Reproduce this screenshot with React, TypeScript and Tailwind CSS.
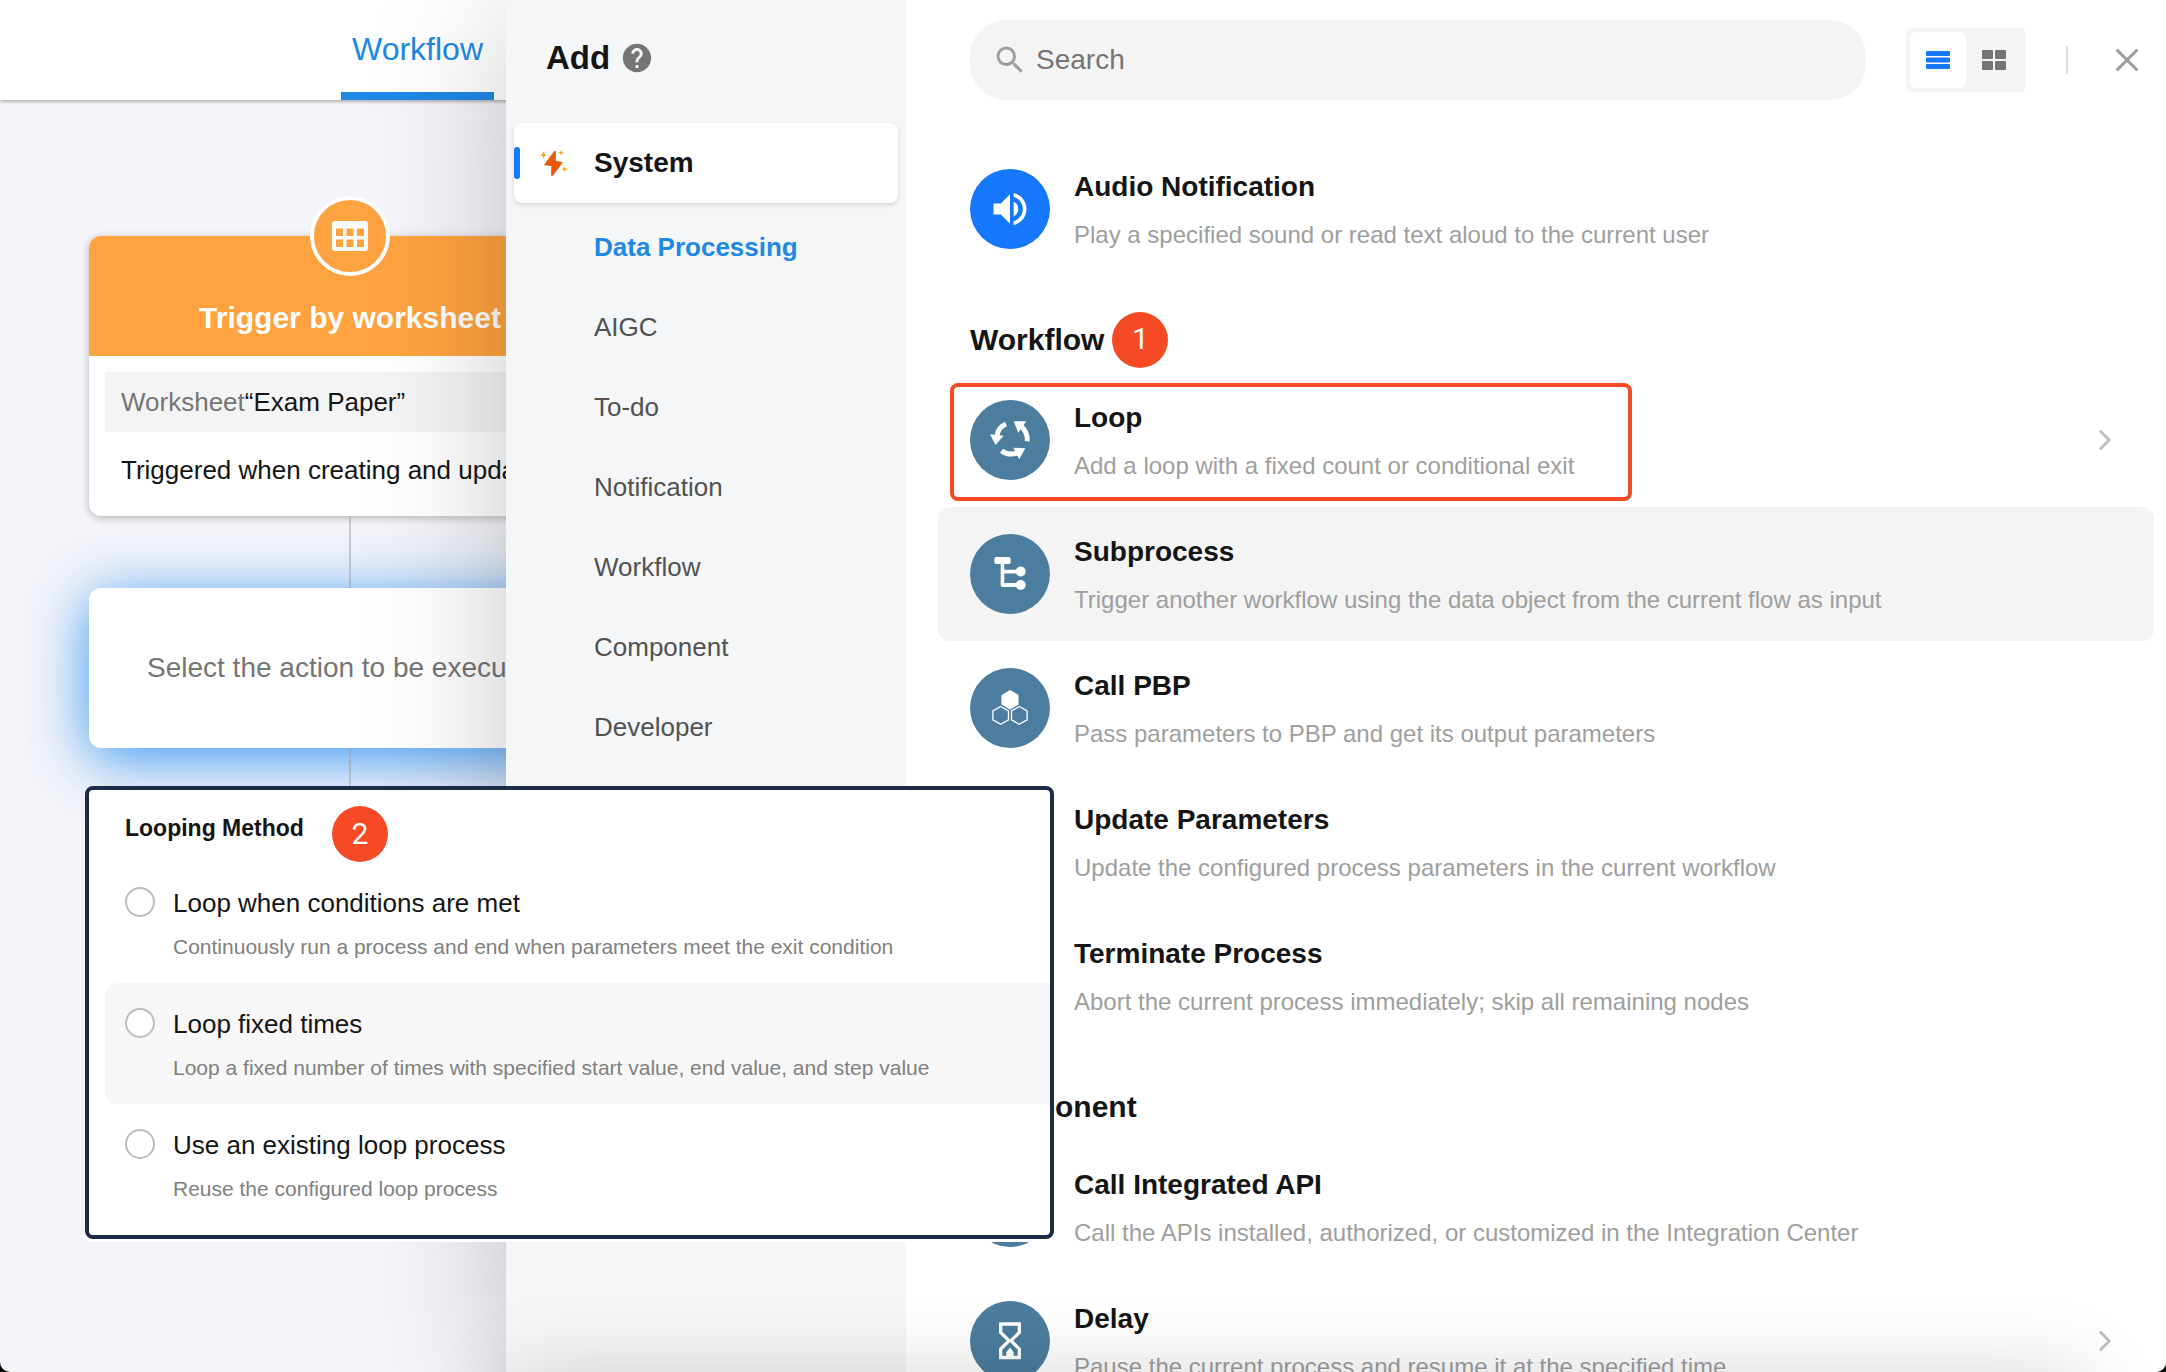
import { ReactNode, useState } from "react";
import { ChevronRight, X } from "lucide-react";
import { MdApi, MdEdit, MdHelp, MdSearch, MdStop, MdVolumeUp } from "react-icons/md";

interface ActionItem {
    title: string;
    description: string;
    icon: ReactNode;
    color?: string;
    expandable?: boolean;
    hovered?: boolean;
    marked?: boolean;
}

interface LoopMethod {
    id: string;
    label: string;
    description: string;
    hovered?: boolean;
}

const TableIcon = () => (
    <svg width="36" height="30" viewBox="0 0 36 30" aria-hidden="true">
        <path
            fill="#fff"
            fillRule="evenodd"
            d="M3 0h30a3 3 0 0 1 3 3v24a3 3 0 0 1-3 3H3a3 3 0 0 1-3-3V3a3 3 0 0 1 3-3zM4 7.500v7.500h7V7.500zM14.500 7.500v7.500h7V7.500zM25 7.500v7.500h7V7.500zM4 18.500v7.500h7v-7.500zM14.500 18.500v7.500h7v-7.500zM25 18.500v7.500h7v-7.500z"
        />
    </svg>
);

const BoltIcon = () => (
    <svg width="28" height="26" viewBox="0 0 28 26" aria-hidden="true">
        <path
            fill="#ea5a05"
            stroke="#ea5a05"
            strokeLinejoin="round"
            d="M14.500 1.300 4.500 14.800l7.500.800-.400 9.700h1.200l9.500-12.800-7-1.200V1.300z"
        />
        <path
            fill="#ff9f0e"
            d="M3.500 1.300l1 2.700 2.700 1-2.700 1-1 2.700-1-2.700L0 5l2.500-1zM21 0l.800 1.900 2 .800-2 .800L21 5.500l-.800-2-2-.800 2-.800zM24.500 16.300l.800 2 2 .800-2 .800-.800 2-.800-2-2-.800 2-.800z"
        />
    </svg>
);

const ListIcon = () => (
    <svg width="24" height="18" viewBox="0 0 24 18" fill="currentColor" aria-hidden="true">
        <rect width="24" height="5" rx="1" />
        <rect y="6.500" width="24" height="5" rx="1" />
        <rect y="13" width="24" height="5" rx="1" />
    </svg>
);

const GridIcon = () => (
    <svg width="24" height="20" viewBox="0 0 24 20" fill="currentColor" aria-hidden="true">
        <rect width="11" height="9" rx="1" />
        <rect x="13" width="11" height="9" rx="1" />
        <rect y="11" width="11" height="9" rx="1" />
        <rect x="13" y="11" width="11" height="9" rx="1" />
    </svg>
);

const LoopIcon = () => (
    <svg width="80" height="80" viewBox="0 0 80 80" aria-hidden="true">
        <g fill="none" stroke="#fff" strokeWidth="5">
            <path d="M36 24C31 26 27.500 30 26.800 36.500" />
            <path d="M57.300 41.300C57.800 35 55.500 29.500 50 25.500" />
            <path d="M31.500 50.700C36.500 54.500 42.500 55 49 52.500" />
        </g>
        <g fill="#fff">
            <path d="M20 34.300 33.700 35.700 25.500 45z" />
            <path d="M43.700 21.300H56.300L48.300 32.700z" />
            <path d="M43.300 47.700 55.300 48.300 49.300 59.300z" />
        </g>
    </svg>
);

const SubprocessIcon = () => (
    <svg width="80" height="80" viewBox="0 0 80 80" fill="#fff" aria-hidden="true">
        <rect x="24.300" y="23" width="16.400" height="7" rx="2" />
        <path d="M30.700 28h3.600v7.700H50v3.800H34.300V49H50v4H32.700a2 2 0 0 1-2-2z" />
        <circle cx="50.700" cy="37.500" r="5" />
        <circle cx="50.700" cy="51" r="5" />
    </svg>
);

const HexagonsIcon = () => (
    <svg width="80" height="80" viewBox="0 0 80 80" aria-hidden="true">
        <path fill="#fff" d="M40 22l8.500 4.900v9.700L40 41.400l-8.500-4.800v-9.700z" />
        <g fill="none" stroke="#fff" strokeWidth="1.300">
            <path d="M30.700 38.500l7.800 4.500v8.800l-7.800 4.500-7.800-4.500V43z" />
            <path d="M49.300 38.500l7.800 4.500v8.800l-7.800 4.500-7.800-4.500V43z" />
        </g>
    </svg>
);

const HourglassIcon = () => (
    <svg width="80" height="80" viewBox="0 0 80 80" aria-hidden="true">
        <path
            fill="none"
            stroke="#fff"
            strokeWidth="3.300"
            d="M30.700 23h18.600v8.500L41 39.700l8.300 8.300v8.500H30.700V48l8.300-8.300-8.300-8.200z"
        />
        <path fill="#fff" d="M36.300 56v-4.800l3.700-4.700 3.700 4.700V56z" />
    </svg>
);

const categories = [
    "Data Processing",
    "AIGC",
    "To-do",
    "Notification",
    "Workflow",
    "Component",
    "Developer",
];

const notificationItems: ActionItem[] = [
    {
        title: "Audio Notification",
        description: "Play a specified sound or read text aloud to the current user",
        icon: <MdVolumeUp size={44} />,
        color: "bg-[#1677ff]",
    },
];

const workflowItems: ActionItem[] = [
    {
        title: "Loop",
        description: "Add a loop with a fixed count or conditional exit",
        icon: <LoopIcon />,
        expandable: true,
        marked: true,
    },
    {
        title: "Subprocess",
        description: "Trigger another workflow using the data object from the current flow as input",
        icon: <SubprocessIcon />,
        hovered: true,
    },
    {
        title: "Call PBP",
        description: "Pass parameters to PBP and get its output parameters",
        icon: <HexagonsIcon />,
    },
    {
        title: "Update Parameters",
        description: "Update the configured process parameters in the current workflow",
        icon: <MdEdit size={40} />,
    },
    {
        title: "Terminate Process",
        description: "Abort the current process immediately; skip all remaining nodes",
        icon: <MdStop size={40} />,
    },
];

const componentItems: ActionItem[] = [
    {
        title: "Call Integrated API",
        description: "Call the APIs installed, authorized, or customized in the Integration Center",
        icon: <MdApi size={40} />,
    },
    {
        title: "Delay",
        description: "Pause the current process and resume it at the specified time",
        icon: <HourglassIcon />,
        expandable: true,
    },
];

const loopMethods: LoopMethod[] = [
    {
        id: "conditions",
        label: "Loop when conditions are met",
        description: "Continuously run a process and end when parameters meet the exit condition",
    },
    {
        id: "fixed",
        label: "Loop fixed times",
        description: "Loop a fixed number of times with specified start value, end value, and step value",
        hovered: true,
    },
    {
        id: "existing",
        label: "Use an existing loop process",
        description: "Reuse the configured loop process",
    },
];

const StepBadge = ({ step }: { step: number }) => (
    <span className="flex size-14 items-center justify-center rounded-full bg-[#f54a25] pb-0.5 font-['Roboto',sans-serif] text-[30px] font-normal text-white">
        {step}
    </span>
);

const ActionRow = ({ item }: { item: ActionItem }) => (
    <li className="relative">
        <button
            type="button"
            className={`flex h-[134px] w-full items-center rounded-xl pr-8 pl-8 text-left ${
                item.hovered ? "bg-[#f4f4f4]" : ""
            }`}
        >
            <span
                className={`flex size-20 shrink-0 items-center justify-center rounded-full text-white ${
                    item.color || "bg-[#4c7d9e]"
                }`}
            >
                {item.icon}
            </span>
            <span className="ml-6 flex min-w-0 flex-1 flex-col pt-1">
                <span className="truncate text-[28px] leading-[48px] font-bold text-[#151515]">
                    {item.title}
                </span>
                <span className="truncate text-2xl leading-[48px] text-[#9e9e9e]">
                    {item.description}
                </span>
            </span>
            {item.expandable && (
                <ChevronRight size={34} className="shrink-0 text-[#bdbdbd]" />
            )}
        </button>
        {/* Step highlight around the action */}
        {item.marked && (
            <span className="pointer-events-none absolute top-2.5 left-3 h-[118px] w-[682px] rounded-lg border-4 border-[#f54a25]" />
        )}
    </li>
);

const ActionSection = ({
    title,
    step,
    items,
}: {
    title?: string;
    step?: number;
    items: ActionItem[];
}) => (
    <section>
        {title && (
            <h3 className="flex h-[97px] items-center gap-2 pt-7.5 pl-8 text-3xl font-bold text-[#151515]">
                {title}
                {step && <StepBadge step={step} />}
            </h3>
        )}
        <ul>
            {items.map((item) => (
                <ActionRow key={item.title} item={item} />
            ))}
        </ul>
    </section>
);

const Canvas = () => (
    <main className="isolate flex h-full flex-col bg-[#f4f4f9]">
        <nav className="z-10 flex h-[100px] shrink-0 bg-white pl-[341px] shadow-[0_1px_4px_rgba(0,0,0,0.4)]">
            <a
                href="#workflow"
                className="flex items-center border-b-8 border-[#1e88e5] px-[11px] pt-1.5 text-[32px] text-[#1e88e5]"
            >
                Workflow
            </a>
        </nav>
        <div className="ml-[89px] flex w-[522px] flex-col items-center pt-24">
            <div className="z-10 -mb-20 flex size-20 items-center justify-center rounded-full border-4 border-white bg-[#ffa340]">
                <TableIcon />
            </div>
            <div className="mt-10 w-full rounded-xl bg-white shadow-[0_2px_8px_rgba(0,0,0,0.25)]">
                <h2 className="flex h-30 items-end justify-center rounded-t-xl bg-[#ffa340] pb-4.5 text-3xl leading-10 font-bold text-white">
                    Trigger by worksheet
                </h2>
                <div className="p-4 text-[26px] leading-[60px] whitespace-nowrap text-[#151515]">
                    <p className="bg-[#f4f4f4] px-4">
                        <span className="text-[#757575]">Worksheet</span>“Exam Paper”
                    </p>
                    <p className="mt-2 px-4">Triggered when creating and updating</p>
                </div>
            </div>
            <div className="z-10 h-[72px] w-0.5 bg-[#9e9e9e]/50" />
            <button
                type="button"
                className="h-40 w-full rounded-xl bg-white px-[58px] text-left text-[28px] whitespace-nowrap text-[#757575] shadow-[0_10px_60px_rgba(33,140,243,0.9)]"
            >
                Select the action to be executed
            </button>
            <div className="z-10 h-[72px] w-0.5 bg-[#9e9e9e]/50" />
        </div>
    </main>
);

const Sidebar = () => (
    <aside className="w-[400px] shrink-0 bg-[#f5f6f8] px-2">
        <h1 className="flex h-[123px] items-center gap-2.5 pb-2 pl-8 text-[33px] font-bold text-[#151515]">
            Add
            <MdHelp size={34} className="text-[#757575]" />
        </h1>
        <button
            type="button"
            className="flex h-20 w-full items-center rounded-lg bg-white text-[28px] font-bold text-[#151515] shadow-[0_2px_4px_rgba(0,0,0,0.14)]"
        >
            <span className="mr-5 h-8 w-1.5 rounded-sm bg-[#1677ff]" />
            <BoltIcon />
            <span className="ml-[26px]">System</span>
        </button>
        <ul className="mt-1">
            {categories.map((name, index) => (
                <li key={name}>
                    <button
                        type="button"
                        className={`h-20 w-full pl-20 text-left text-[26px] ${
                            index === 0 ? "font-bold text-[#1e88e5]" : "text-[#515151]"
                        }`}
                    >
                        {name}
                    </button>
                </li>
            ))}
        </ul>
    </aside>
);

const DrawerHeader = () => {
    const [view, setView] = useState("list");

    return (
        <header className="flex h-[120px] shrink-0 items-center pr-2 pl-16">
            <label className="flex h-20 flex-1 items-center gap-2 rounded-[36px] bg-[#f4f4f4] pl-[22px]">
                <MdSearch size={36} className="text-[#9e9e9e]" />
                <input
                    type="text"
                    placeholder="Search"
                    aria-label="Search"
                    className="min-w-0 flex-1 bg-transparent text-[28px] outline-none placeholder:text-[#757575]"
                />
            </label>
            <div className="ml-10 flex h-16 w-30 rounded-md bg-[#f4f4f4] p-1">
                <button
                    type="button"
                    aria-label="List view"
                    onClick={() => setView("list")}
                    className={`flex size-14 items-center justify-center rounded-md ${
                        view === "list" ? "bg-white text-[#1677ff]" : "text-[#757575]"
                    }`}
                >
                    <ListIcon />
                </button>
                <button
                    type="button"
                    aria-label="Grid view"
                    onClick={() => setView("grid")}
                    className={`flex size-14 items-center justify-center rounded-md ${
                        view === "grid" ? "bg-white text-[#1677ff]" : "text-[#757575]"
                    }`}
                >
                    <GridIcon />
                </button>
            </div>
            <div className="ml-10 h-7 w-0.5 bg-[#dddddd]" />
            <button type="button" aria-label="Close" className="ml-7 p-3 text-[#9e9e9e]">
                <X size={38} />
            </button>
        </header>
    );
};

const AddDrawer = () => (
    <div className="absolute inset-y-0 right-0 left-[506px] flex bg-white shadow-[0_20px_130px_rgba(0,0,0,0.22)]">
        <Sidebar />
        <div className="flex min-w-0 flex-1 flex-col">
            <DrawerHeader />
            <div className="min-h-0 flex-1 overflow-hidden pt-[22px] pr-3 pl-8">
                <ActionSection items={notificationItems} />
                <ActionSection title="Workflow" step={1} items={workflowItems} />
                <ActionSection title="Component" items={componentItems} />
            </div>
        </div>
        {/* Soft shade along the bottom edge */}
        <div className="pointer-events-none absolute right-20 -bottom-20 left-0 h-20 shadow-[0_0_80px_rgba(0,0,0,0.16)]" />
    </div>
);

const LoopMethodPanel = () => (
    <fieldset className="absolute top-[786px] left-[85px] w-[969px] rounded-lg border-4 border-[#1d2b47] bg-white pb-2.5 pl-4 shadow-[0_3px_0_#ffffff]">
        <div className="flex h-[72px] items-end gap-7 pl-5">
            <span className="pb-4 text-[23px] leading-9 font-bold text-[#151515]">
                Looping Method
            </span>
            <StepBadge step={2} />
        </div>
        {loopMethods.map((method) => (
            <label
                key={method.id}
                className={`flex h-[121px] gap-[18px] rounded-l-xl pt-[25px] pl-5 ${
                    method.hovered ? "bg-[#f7f7f7]" : ""
                }`}
            >
                <input
                    type="radio"
                    name="loop-method"
                    className="size-[30px] shrink-0 appearance-none rounded-full border-2 border-[#bdbdbd] bg-white checked:border-8 checked:border-[#1677ff]"
                />
                <span className="flex flex-col">
                    <span className="text-[26px] leading-8 text-[#151515]">{method.label}</span>
                    <span className="mt-3 text-[21px] leading-8 text-[#808080]">
                        {method.description}
                    </span>
                </span>
            </label>
        ))}
    </fieldset>
);

export default function App() {
    return (
        <div className="h-screen bg-black font-['Liberation_Sans',Arial,sans-serif]">
            <div className="relative h-full overflow-hidden rounded-b-[10px]">
                <Canvas />
                <AddDrawer />
                <LoopMethodPanel />
            </div>
        </div>
    );
}
